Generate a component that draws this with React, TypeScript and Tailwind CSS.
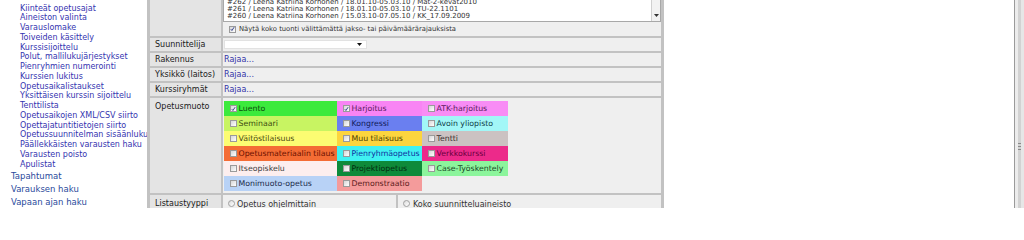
import React from "react";

const subLinks = [
  "Kiinteät opetusajat",
  "Aineiston valinta",
  "Varauslomake",
  "Toiveiden käsittely",
  "Kurssisijoittelu",
  "Polut, mallilukujärjestykset",
  "Pienryhmien numerointi",
  "Kurssien lukitus",
  "Opetusaikalistaukset",
  "Yksittäisen kurssin sijoittelu",
  "Tenttilista",
  "Opetusaikojen XML/CSV siirto",
  "Opettajatuntitietojen siirto",
  "Opetussuunnitelman sisäänluku",
  "Päällekkäisten varausten haku",
  "Varausten poisto",
  "Apulistat",
];

const topLinks = ["Tapahtumat", "Varauksen haku", "Vapaan ajan haku"];

const imports = [
  "#262 / Leena Katriina Korhonen / 18.01.10-05.03.10 / Mat-2-kevat2010",
  "#261 / Leena Katriina Korhonen / 18.01.10-05.03.10 / TU-22.1101",
  "#260 / Leena Katriina Korhonen / 15.03.10-07.05.10 / KK_17.09.2009",
];

// opetusmuodot, three per row
const kinds = [
  { label: "Luento", bg: "bg-[#3cea3c]", fg: "text-[#0b4d0b]", checked: true },
  { label: "Harjoitus", bg: "bg-[#f884f4]", fg: "text-[#5a1a5a]", checked: true },
  { label: "ATK-harjoitus", bg: "bg-[#f88cf5]", fg: "text-[#5a1a5a]" },
  { label: "Seminaari", bg: "bg-[#c8f462]", fg: "text-[#3a4a10]" },
  { label: "Kongressi", bg: "bg-[#6a7ff0]", fg: "text-[#101a5a]" },
  { label: "Avoin yliopisto", bg: "bg-[#a2f7f7]", fg: "text-[#10404a]" },
  { label: "Väitöstilaisuus", bg: "bg-[#fcfc72]", fg: "text-[#4a4a10]" },
  { label: "Muu tilaisuus", bg: "bg-[#fcd53e]", fg: "text-[#4a3a00]" },
  { label: "Tentti", bg: "bg-[#cbc2c2]", fg: "text-[#3a3030]" },
  { label: "Opetusmateriaalin tilaus", bg: "bg-[#f46c34]", fg: "text-[#6a1000]" },
  { label: "Pienryhmäopetus", bg: "bg-[#40f2f2]", fg: "text-[#1030a0]" },
  { label: "Verkkokurssi", bg: "bg-[#ec2a8a]", fg: "text-[#6a0040]" },
  { label: "Itseopiskelu", bg: "bg-[#fdeeee]", fg: "text-[#404040]" },
  { label: "Projektiopetus", bg: "bg-[#0e8a3a]", fg: "text-[#032a10]" },
  { label: "Case-Työskentely", bg: "bg-[#8cf59c]", fg: "text-[#1a4a2a]" },
  { label: "Monimuoto-opetus", bg: "bg-[#b8d2f6]", fg: "text-[#1a2a4a]" },
  { label: "Demonstraatio", bg: "bg-[#f49b9b]", fg: "text-[#5a1a1a]" },
];

function Check({ checked }: { checked?: boolean }) {
  return (
    <span className="inline-flex w-[7px] h-[7px] shrink-0 items-center justify-center border border-[#9a9a9a] bg-gradient-to-br from-[#d6d6d6] to-white">
      {checked && (
        <svg width="6" height="6" viewBox="0 0 6 6" className="block">
          <path d="M1 3.2 L2.3 4.8 L5 0.8" fill="none" stroke="#2a3a8a" strokeWidth="1.1" />
        </svg>
      )}
    </span>
  );
}

function Radio() {
  return (
    <span className="inline-block w-[7px] h-[7px] shrink-0 rounded-full border border-[#a0a0a0] bg-gradient-to-br from-[#dcdcdc] to-white" />
  );
}

function Label({ children, top }: { children: React.ReactNode; top?: boolean }) {
  return (
    <div className={`bg-[#e4e4e4] pl-[5px] text-[8px] text-[#1a1a1a] flex ${top ? "items-start pt-[3px]" : "items-center pt-px"}`}>
      {children}
    </div>
  );
}

export default function App() {
  return (
    <div className="flex h-[208px] w-[1024px] overflow-hidden bg-white font-['DejaVu_Sans',Verdana,sans-serif]">
      {/* sidebar */}
      <nav className="w-[147px] shrink-0 pt-[3.5px]">
        <ul className="pl-[20px] text-[8px] leading-[9.77px] text-[#3434b0] whitespace-nowrap">
          {subLinks.map((l) => (
            <li key={l}>{l}</li>
          ))}
        </ul>
        <ul className="pl-[11px] text-[8.5px] leading-[13px] text-[#2a4a9c] whitespace-nowrap">
          {topLinks.map((l) => (
            <li key={l}>{l}</li>
          ))}
        </ul>
      </nav>

      {/* form table */}
      <div className="w-[517px] shrink-0 bg-[#c2c2c2] px-[3px] flex flex-col gap-[2px]">
        {/* imported data */}
        <div className="grid grid-cols-[71px_1fr] gap-[2px] h-[36px] shrink-0">
          <div className="bg-[#e4e4e4]" />
          <div className="bg-[#efefef] flex flex-col">
            <div className="h-[22px] bg-white border-x border-b border-[#a8a8a8] flex overflow-hidden">
              <div className="flex-1 pl-[3px] -mt-px text-[7px] leading-[7px] text-[#333] whitespace-nowrap">
                {imports.map((l) => (
                  <div key={l}>{l}</div>
                ))}
              </div>
              <div className="w-[9px] border-l border-[#d0d0d0] bg-[#f2f2f2] flex items-end justify-center pb-[4px]">
                <svg width="5" height="3" viewBox="0 0 5 3">
                  <path d="M0 0 H5 L2.5 3 Z" fill="#333" />
                </svg>
              </div>
            </div>
            <div className="flex items-center gap-[3px] pl-[6px] mt-[3px] h-[8px] text-[6.8px] text-[#333] whitespace-nowrap">
              <Check checked />
              <span>Näytä koko tuonti välittämättä jakso- tai päivämäärärajauksista</span>
            </div>
          </div>
        </div>

        <div className="grid grid-cols-[71px_1fr] gap-[2px] h-[13px] shrink-0">
          <Label>Suunnittelija</Label>
          <div className="bg-[#efefef] flex items-center pl-[1px]">
            <div className="w-[143px] h-[9px] bg-white border border-[#e2e2e2] flex items-center justify-end pr-[4px]">
              <svg width="5" height="3" viewBox="0 0 5 3">
                <path d="M0 0 H5 L2.5 3 Z" fill="#111" />
              </svg>
            </div>
          </div>
        </div>

        {["Rakennus", "Yksikkö (laitos)", "Kurssiryhmät"].map((l) => (
          <div key={l} className="grid grid-cols-[71px_1fr] gap-[2px] h-[13px] shrink-0">
            <Label>{l}</Label>
            <div className="bg-[#efefef] flex items-center pt-px pl-[1px] text-[8px] text-[#3434a8]">Rajaa...</div>
          </div>
        ))}

        <div className="grid grid-cols-[71px_1fr] gap-[2px] h-[95px] shrink-0">
          <Label top>Opetusmuoto</Label>
          <div className="bg-[#efefef] pl-[1px] pt-[3px]">
            <div className="grid grid-cols-[113px_85px_86px] auto-rows-[15px] w-[284px]">
              {kinds.map((k) => (
                <div key={k.label} className={`${k.bg} ${k.fg} flex items-center pl-[6px] gap-[1.5px] text-[7.8px] whitespace-nowrap overflow-hidden`}>
                  <Check checked={k.checked} />
                  <span>{k.label}</span>
                </div>
              ))}
            </div>
          </div>
        </div>

        <div className="grid grid-cols-[71px_173px_1fr] gap-[2px] h-[20px] shrink-0">
          <Label top>Listaustyyppi</Label>
          <div className="bg-[#efefef] flex items-start pt-[5px] pl-[5px] gap-[2px] text-[8px] text-[#333]">
            <Radio />
            <span className="-mt-[1.5px]">Opetus ohjelmittain</span>
          </div>
          <div className="bg-[#efefef] flex items-start pt-[5px] pl-[5px] gap-[3px] text-[8px] text-[#333]">
            <Radio />
            <span className="-mt-[1.5px]">Koko suunnitteluaineisto</span>
          </div>
        </div>
      </div>

      <div className="flex-1" />

      {/* page scrollbar */}
      <div className="w-[10px] shrink-0 border-l border-[#9a9a9a] flex">
        <div className="w-[3px] bg-[#ececec]" />
        <div className="w-[3px] bg-[#d2d2d2] pt-[143px]">
          <div className="h-[7px] flex flex-col justify-between">
            <div className="h-px bg-[#8a8a8a]" />
            <div className="h-px bg-[#8a8a8a]" />
            <div className="h-px bg-[#8a8a8a]" />
          </div>
        </div>
        <div className="flex-1 bg-[#e6e6e6]" />
      </div>
    </div>
  );
}
